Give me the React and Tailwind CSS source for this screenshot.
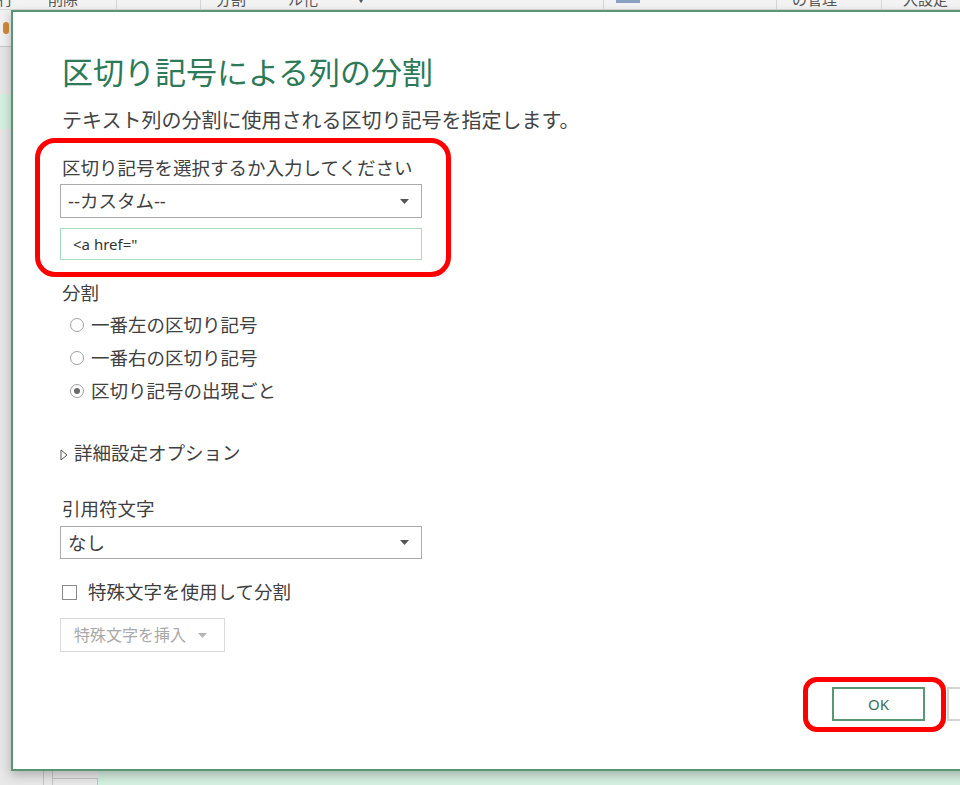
import React from 'react';

const FONT = { fontFamily: '"Noto Sans", "Noto Sans CJK JP", sans-serif' };

// Small down arrow used by the combo boxes
const Caret = ({ className = 'text-[#555]' }) => (
    <svg className={className} width="9" height="5" viewBox="0 0 9 5" fill="currentColor">
        <path d="M0 0H9L4.5 5Z" />
    </svg>
);

const Radio = ({ checked, label }) => (
    <div className="flex items-center h-[33px] pl-[10px]">
        <span className="w-[14px] h-[14px] rounded-full border border-[#a0a0a0] flex items-center justify-center">
            {checked && <span className="w-[6px] h-[6px] rounded-full bg-[#6a6a6a]" />}
        </span>
        <span className="ml-[7px]">{label}</span>
    </div>
);

const Select = ({ value }) => (
    <div className="w-[362px] flex items-center justify-between border border-[#ababab] pl-[7px] pr-[12px] bg-white">
        <span>{value}</span>
        <Caret />
    </div>
);

// Excel window peeking out behind the dialog
const Background = () => (
    <div className="flex flex-col w-full h-full">
        <div className="relative h-[10px] bg-[#f3f3f3] border-b border-[#dcdcdc] overflow-hidden text-[15px] text-[#555] leading-none">
            <span className="absolute left-[-2px] top-[-8px]">行</span>
            <span className="absolute left-[48px] top-[-8px]">削除</span>
            <span className="absolute left-[116px] top-0 h-full w-px bg-[#d6d6d6]" />
            <span className="absolute left-[200px] top-0 h-full w-px bg-[#d6d6d6]" />
            <span className="absolute left-[216px] top-[-8px]">分割</span>
            <span className="absolute left-[288px] top-[-8px]">ル化</span>
            <span className="absolute left-[356px] top-[-6px] text-[10px]">▼</span>
            <span className="absolute left-[603px] top-0 h-full w-px bg-[#d6d6d6]" />
            <span className="absolute left-[616px] top-0 h-[3px] w-[24px] bg-[#8aa0c0]" />
            <span className="absolute left-[776px] top-0 h-full w-px bg-[#d6d6d6]" />
            <span className="absolute left-[792px] top-[-8px]">の管理</span>
            <span className="absolute left-[881px] top-0 h-full w-px bg-[#d6d6d6]" />
            <span className="absolute left-[903px] top-[-8px]">入設定</span>
        </div>
        <div className="flex-1 flex flex-col w-[11px] bg-[#e6e6e6]">
            <div className="h-[36px] bg-[#f1f1f1] relative">
                <span className="absolute left-[3px] top-[12px] w-[6px] h-[12px] bg-[#d08a3a] rounded-sm" />
            </div>
            <div className="h-px bg-[#c8c8c8]" />
            <div className="h-[47px]" />
            <div className="h-[35px] bg-[#d5efe0]" />
            <div className="flex-1" />
        </div>
        <div className="h-[14px] flex bg-[#e8e8e8]">
            <div className="w-[43px]" />
            <div className="w-[10px] border-x border-[#c4c4c4]" />
            <div className="w-[45px] border-t border-[#c4c4c4] mt-[7px] border-r" />
            <div className="flex-1 bg-[#d5efe0]" />
        </div>
    </div>
);

export default function App() {
    return (
        <div className="relative w-[960px] h-[785px] overflow-hidden bg-[#e8e8e8]" style={FONT}>
            <Background />

            {/* Dialog */}
            <div className="absolute left-[11px] top-[10px] w-[980px] h-[761px] bg-white border-2 border-[#5a9574] shadow-[0_4px_10px_rgba(0,0,0,0.25)] text-[#404040] text-[18.5px]">
                <div className="pl-[47px] pt-[40px] flex flex-col">
                    <h1 className="pl-[2px] h-[40px] leading-[40px] text-[31px] text-[#2c7a57]">
                        区切り記号による列の分割
                    </h1>
                    <p className="pl-[2px] mt-[15px] h-[28px] leading-[28px] text-[20px] text-[#444]">
                        テキスト列の分割に使用される区切り記号を指定します。
                    </p>

                    <div className="pl-[2px] mt-[20px] h-[26px] leading-[26px]">区切り記号を選択するか入力してください</div>
                    <div className="mt-[3px] h-[34px] flex">
                        <Select value="--カスタム--" />
                    </div>
                    <div className="mt-[10px] w-[362px] h-[32px] border border-[#a5dcbf] flex items-center pl-[12px] text-[15px] text-[#333]">
                        &lt;a href="
                    </div>

                    <div className="pl-[2px] mt-[20px] h-[26px] leading-[26px]">分割</div>
                    <div className="mt-[2px] flex flex-col">
                        <Radio label="一番左の区切り記号" />
                        <Radio label="一番右の区切り記号" />
                        <Radio checked label="区切り記号の出現ごと" />
                    </div>

                    <div className="mt-[33px] h-[26px] flex items-center">
                        <svg width="8" height="12" viewBox="0 0 8 12" className="mt-[4px]">
                            <path d="M1 1L7 6L1 11Z" fill="none" stroke="#555" strokeWidth="1" />
                        </svg>
                        <span className="ml-[6px]">詳細設定オプション</span>
                    </div>

                    <div className="pl-[2px] mt-[30px] h-[26px] leading-[26px]">引用符文字</div>
                    <div className="mt-[4px] h-[33px] flex">
                        <Select value="なし" />
                    </div>

                    <div className="mt-[20px] h-[26px] flex items-center">
                        <span className="w-[15px] h-[15px] border border-[#8a8a8a] ml-[2px]" />
                        <span className="ml-[11px]">特殊文字を使用して分割</span>
                    </div>

                    <div className="mt-[13px] w-[165px] h-[34px] border border-[#dadada] flex items-center pl-[13px] gap-[12px] text-[16px] text-[#a8a8a8]">
                        <span>特殊文字を挿入</span>
                        <Caret className="text-[#b5b5b5]" />
                    </div>

                    <div className="mt-[35px] flex pl-[772px] gap-[22px]">
                        <button className="shrink-0 w-[93px] h-[34px] border-2 border-[#5a9574] text-[15px] text-[#3b6f55]">OK</button>
                        <button className="shrink-0 w-[93px] h-[34px] border-2 border-[#d4d4d4]" />
                    </div>
                </div>

                {/* Red annotation frames */}
                <div className="absolute left-[22px] top-[126px] w-[416px] h-[139px] border-[5px] border-[#ff0000] rounded-[20px]" />
                <div className="absolute left-[790px] top-[665px] w-[143px] h-[55px] border-[5px] border-[#ff0000] rounded-[14px]" />
            </div>
        </div>
    );
}
